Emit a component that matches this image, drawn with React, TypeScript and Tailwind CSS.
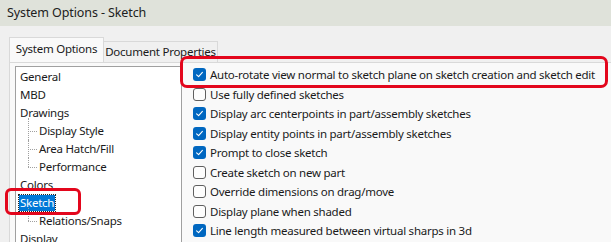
import React from 'react'

type Opt = { label: string, checked: boolean }

const options: Opt[] = [
  { label: 'Auto-rotate view normal to sketch plane on sketch creation and sketch edit', checked: true },
  { label: 'Use fully defined sketches', checked: false },
  { label: 'Display arc centerpoints in part/assembly sketches', checked: true },
  { label: 'Display entity points in part/assembly sketches', checked: true },
  { label: 'Prompt to close sketch', checked: true },
  { label: 'Create sketch on new part', checked: false },
  { label: 'Override dimensions on drag/move', checked: false },
  { label: 'Display plane when shaded', checked: false },
  { label: 'Line length measured between virtual sharps in 3d', checked: true }
]

type Node = { label: string, child?: boolean, last?: boolean, first?: boolean, selected?: boolean }

const tree: Node[] = [
  { label: 'General' },
  { label: 'MBD' },
  { label: 'Drawings' },
  { label: 'Display Style', child: true, first: true },
  { label: 'Area Hatch/Fill', child: true },
  { label: 'Performance', child: true, last: true },
  { label: 'Colors' },
  { label: 'Sketch', selected: true },
  { label: 'Relations/Snaps', child: true, first: true, last: true },
  { label: 'Display' }
]

function CheckBox ({ checked }: { checked: boolean }): React.ReactElement {
  if (checked) {
    return (
      <span className="flex items-center justify-center w-[13px] h-[13px] rounded-[3px] bg-[#0067c0] shrink-0">
        <svg width="9" height="9" viewBox="0 0 9 9" fill="none">
          <path d="M1.6 4.8 L3.6 6.6 L7.4 2.4" stroke="white" strokeWidth="1.1" strokeLinecap="round" strokeLinejoin="round" />
        </svg>
      </span>
    )
  }
  return <span className="w-[13px] h-[13px] rounded-[3px] border border-[#5f5f5f] bg-[#fdfdfd] shrink-0" />
}

function TreeRow ({ node }: { node: Node }): React.ReactElement {
  return (
    <div className="relative flex items-center h-[18px] whitespace-nowrap">
      {node.child && (
        <>
          <span className={`absolute left-[12px] w-0 border-l border-dotted border-[#a0a0a0] ${node.first ? 'top-[-4px]' : 'top-0'} ${node.first && node.last ? 'h-[13px]' : node.last ? 'h-[9px]' : node.first ? 'h-[22px]' : 'h-full'}`} />
          <span className="absolute left-[12px] top-[9px] w-[9px] border-t border-dotted border-[#a0a0a0]" />
        </>
      )}
      <span
        className={node.selected
          ? 'ml-[3px] pl-[1px] pr-[1px] bg-[#0078d7] text-white outline outline-1 outline-dotted outline-[#222] h-[16px] leading-[16px]'
          : node.child ? 'ml-[23px]' : 'ml-[4px]'}
      >
        {node.label}
      </span>
    </div>
  )
}

export default function App (): React.ReactElement {
  return (
    <div className="relative w-[611px] h-[242px] overflow-hidden bg-[#f0f0f0] text-[#1a1a1a] text-[11.5px] tracking-[-0.25px]" style={{ fontFamily: '"Noto Sans", "Open Sans", sans-serif' }}>
      <div className="h-[26px] bg-[#dfe2da] flex items-center pl-[7px] text-[12.5px] tracking-[-0.1px] text-[#202020]">
        System Options - Sketch
      </div>
      <div className="pt-[11px] pl-[9px]">
        <div className="flex items-end h-[25px] whitespace-nowrap">
          <div className="w-[95px] h-[25px] bg-[#f9f9f9] border border-b-0 border-[#d9d9d9] flex items-center justify-center pb-[2px]">
            System Options
          </div>
          <div className="w-[114px] h-[21px] bg-[#f0f0f0] border border-l-0 border-b-0 border-[#d9d9d9] flex items-center justify-center">
            Document Properties
          </div>
        </div>
        <div className="flex h-[180px] bg-[#f9f9f9] border-t border-l border-[#d9d9d9]">
          <div className="shrink-0 ml-[5px] mt-[3px] w-[167px] bg-white border-l border-t border-r border-[#a0a0a0] pt-[1px]">
            {tree.map(n => <TreeRow key={n.label} node={n} />)}
          </div>
          <div className="pl-[11px] pt-[2px]">
            {options.map(o => (
              <div key={o.label} className="flex items-center gap-[4px] h-[19.5px] whitespace-nowrap">
                <CheckBox checked={o.checked} />
                <span>{o.label}</span>
              </div>
            ))}
          </div>
        </div>
      </div>
      <div className="absolute left-[180px] top-[56px] w-[428px] h-[32px] rounded-[7px] border-[3px] border-[#e3061c]" />
      <div className="absolute left-[5px] top-[188px] w-[76px] h-[27px] rounded-[6px] border-[3px] border-[#e3061c]" />
    </div>
  )
}
